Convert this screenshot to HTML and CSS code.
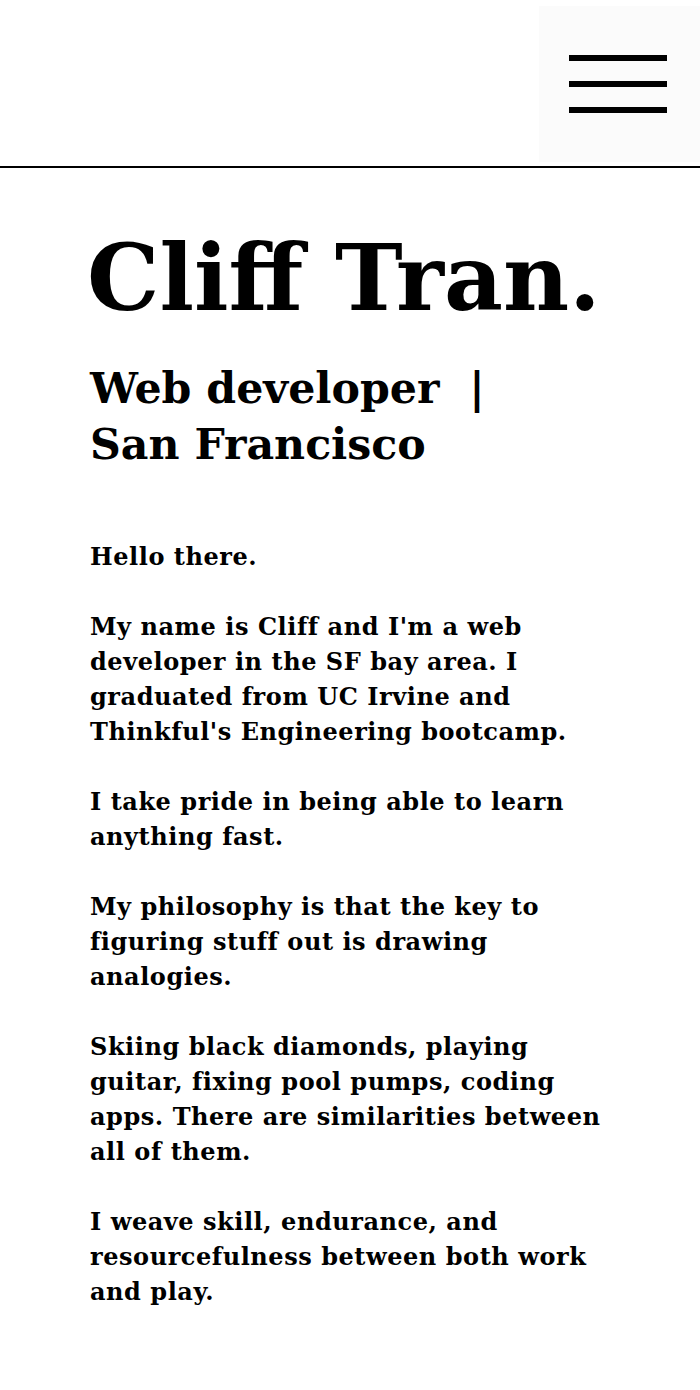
FILE: index.html
```html
<!DOCTYPE html>
<html lang="en">
<head>
<meta charset="utf-8">
<title>Cliff Tran</title>
<link rel="stylesheet" href="styles.css">
</head>
<body>
<header class="site-header">
  <button class="menu-btn" aria-label="Menu">
    <span class="bar"></span>
    <span class="bar"></span>
    <span class="bar"></span>
  </button>
</header>
<main class="content">
  <h1 class="name">Cliff Tran.</h1>
  <h2 class="role">Web developer &nbsp;| San Francisco</h2>
  <section class="about">
    <p>Hello there.</p>
    <p>My name is Cliff and I'm a web developer in the SF bay area. I graduated from UC Irvine and Thinkful's Engineering bootcamp.</p>
    <p>I take pride in being able to learn anything fast.</p>
    <p>My philosophy is that the key to figuring stuff out is drawing analogies.</p>
    <p>Skiing black diamonds, playing guitar, fixing pool pumps, coding apps. There are similarities between all of them.</p>
    <p>I weave skill, endurance, and resourcefulness between both work and play.</p>
  </section>
</main>
</body>
</html>
```
FILE: styles.css
```css
html, body {
  margin: 0;
  padding: 0;
  background: #fff;
  color: #000;
}
body {
  font-family: "DejaVu Serif", "Liberation Serif", serif;
  font-weight: bold;
}
.site-header {
  height: 166px;
  border-bottom: 2px solid #000;
  display: flex;
  justify-content: flex-end;
  align-items: flex-start;
  box-sizing: content-box;
}
.menu-btn {
  margin-top: 6px;
  width: 161px;
  height: 156px;
  background: #fbfbfb;
  border: none;
  padding: 49px 0 0 30px;
  box-sizing: border-box;
  display: flex;
  flex-direction: column;
  gap: 20px;
  align-items: flex-start;
  cursor: pointer;
}
.bar {
  display: block;
  width: 98px;
  height: 6px;
  background: #000;
}
.content {
  padding: 0 90px 60px 90px;
}
.name {
  margin: 60px 0 0 -3px;
  font-size: 91px;
  line-height: 100px;
  letter-spacing: 0;
}
.role {
  margin: 32px 0 0 0;
  font-size: 42.7px;
  line-height: 56px;
  width: 440px;
}
.about {
  margin-top: 67px;
  font-size: 24px;
  line-height: 35px;
  letter-spacing: 0.55px;
  width: 522px;
}
.about p {
  margin: 0 0 35px 0;
}
```
